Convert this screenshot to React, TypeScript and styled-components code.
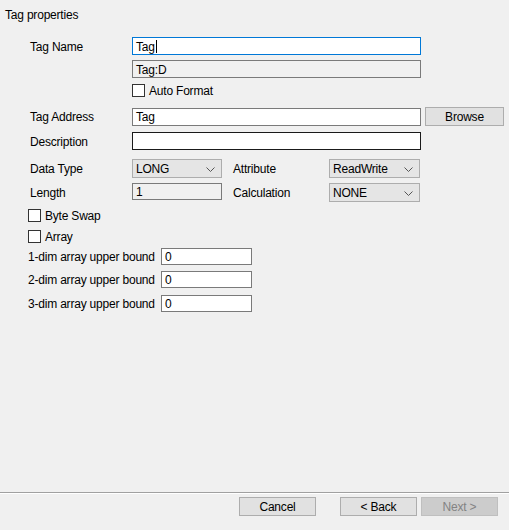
import styled, { createGlobalStyle } from "styled-components";

const GlobalStyle = createGlobalStyle`
    html, body {
        margin: 0;
        padding: 0;
        background: #f0f0f0;
    }
    body {
        font-family: "Liberation Sans", Arial, sans-serif;
        font-size: 12px;
        letter-spacing: -0.2px;
        color: #000;
    }
`;

//styled-components
const Page = styled.div`
    width: 509px;
    height: 530px;
    display: flex;
    flex-direction: column;
    background: #f0f0f0;
    overflow: hidden;
`;

const Title = styled.div`
    padding: 8px 0 0 5px;
    height: 14px;
    line-height: 14px;
`;

const Form = styled.div`
    display: flex;
    flex-direction: column;
    flex: 1;
`;

const Row = styled.div<{ $top: number; $h: number; $left?: number }>`
    display: flex;
    align-items: center;
    margin-top: ${(p) => p.$top}px;
    height: ${(p) => p.$h}px;
    padding-left: ${(p) => (p.$left === undefined ? 30 : p.$left)}px;
`;

const Label = styled.div<{ $w: number }>`
    width: ${(p) => p.$w}px;
    flex-shrink: 0;
    white-space: nowrap;
    line-height: 14px;
    padding-top: 1px;
`;

const TextBox = styled.div<{ $w: number; $h?: number; $focus?: boolean; $dark?: boolean; $readonly?: boolean }>`
    box-sizing: border-box;
    width: ${(p) => p.$w}px;
    height: ${(p) => p.$h || 18}px;
    border: 1px solid
        ${(p) => (p.$focus ? "#0078d7" : p.$dark ? "#1a1a1a" : "#7a7a7a")};
    background: ${(p) => (p.$readonly ? "#f0f0f0" : "#fff")};
    padding: 1px 0 0 3px;
    display: flex;
    align-items: center;
    line-height: 14px;
    white-space: nowrap;
`;

const Caret = styled.span`
    display: inline-block;
    width: 1px;
    height: 13px;
    background: #000;
    margin-left: 1px;
`;

const Select = styled.div<{ $w: number }>`
    box-sizing: border-box;
    width: ${(p) => p.$w}px;
    height: 19px;
    border: 1px solid #adadad;
    background: #e5e5e5;
    padding: 1px 6px 0 3px;
    display: flex;
    align-items: center;
    justify-content: space-between;
    line-height: 14px;
`;

const Check = styled.label`
    display: flex;
    align-items: center;
    gap: 4px;
    line-height: 14px;
`;

const Box = styled.span`
    box-sizing: border-box;
    width: 13px;
    height: 13px;
    border: 1px solid #333;
    background: #fff;
`;

const Button = styled.div<{ $w: number; $disabled?: boolean }>`
    box-sizing: border-box;
    width: ${(p) => p.$w}px;
    height: 19px;
    border: 1px solid ${(p) => (p.$disabled ? "#bfbfbf" : "#adadad")};
    background: ${(p) => (p.$disabled ? "#cccccc" : "#e1e1e1")};
    color: ${(p) => (p.$disabled ? "#838383" : "#000")};
    display: flex;
    align-items: center;
    justify-content: center;
    line-height: 14px;
`;

const Footer = styled.div`
    border-top: 1px solid #a0a0a0;
    box-shadow: inset 0 1px 0 #fff;
    padding: 4px 11px 14px 0;
    display: flex;
    justify-content: flex-end;
`;

const ButtonGroup = styled.div`
    display: flex;
    gap: 4px;
    margin-left: 24px;
`;

const Chevron = () => (
    <svg width="9" height="5" viewBox="0 0 9 5">
        <path d="M0.5 0.5 L4.5 4.5 L8.5 0.5" fill="none" stroke="#555" strokeWidth="1" />
    </svg>
);

const CheckBox = ({ text }: { text: string }) => (
    <Check>
        <Box />
        {text}
    </Check>
);

//Components
const App = () => {
    const bounds = [
        { name: "1-dim array upper bound", top: 5 },
        { name: "2-dim array upper bound", top: 6 },
        { name: "3-dim array upper bound", top: 7 },
    ];
    return (
        <Page>
            <GlobalStyle />
            <Title>Tag properties</Title>
            <Form>
                <Row $top={15} $h={18}>
                    <Label $w={102}>Tag Name</Label>
                    <TextBox $w={289} $focus>
                        Tag
                        <Caret />
                    </TextBox>
                </Row>
                <Row $top={5} $h={18} $left={132}>
                    <TextBox $w={289} $readonly>
                        Tag:D
                    </TextBox>
                </Row>
                <Row $top={6} $h={13} $left={132}>
                    <CheckBox text="Auto Format" />
                </Row>
                <Row $top={10} $h={19}>
                    <Label $w={102}>Tag Address</Label>
                    <TextBox $w={289}>Tag</TextBox>
                    <Button $w={79} style={{ marginLeft: 4 }}>
                        Browse
                    </Button>
                </Row>
                <Row $top={6} $h={18}>
                    <Label $w={102}>Description</Label>
                    <TextBox $w={289} $dark />
                </Row>
                <Row $top={9} $h={19}>
                    <Label $w={102}>Data Type</Label>
                    <Select $w={90}>
                        LONG
                        <Chevron />
                    </Select>
                    <Label $w={96} style={{ paddingLeft: 11 }}>
                        Attribute
                    </Label>
                    <Select $w={91}>
                        ReadWrite
                        <Chevron />
                    </Select>
                </Row>
                <Row $top={5} $h={19}>
                    <Label $w={102}>Length</Label>
                    <TextBox $w={90} $h={17} $readonly style={{ alignSelf: "flex-start" }}>
                        1
                    </TextBox>
                    <Label $w={96} style={{ paddingLeft: 11 }}>
                        Calculation
                    </Label>
                    <Select $w={91}>
                        NONE
                        <Chevron />
                    </Select>
                </Row>
                <Row $top={7} $h={13} $left={28}>
                    <CheckBox text="Byte Swap" />
                </Row>
                <Row $top={8} $h={13} $left={28}>
                    <CheckBox text="Array" />
                </Row>
                {bounds.map((b, i) => (
                    <Row key={i} $top={b.top} $h={17} $left={28}>
                        <Label $w={133}>{b.name}</Label>
                        <TextBox $w={91} $h={17}>
                            0
                        </TextBox>
                    </Row>
                ))}
            </Form>
            <Footer>
                <Button $w={77}>Cancel</Button>
                <ButtonGroup>
                    <Button $w={77}>&lt; Back</Button>
                    <Button $w={77} $disabled>
                        Next &gt;
                    </Button>
                </ButtonGroup>
            </Footer>
        </Page>
    );
};

export default App;
